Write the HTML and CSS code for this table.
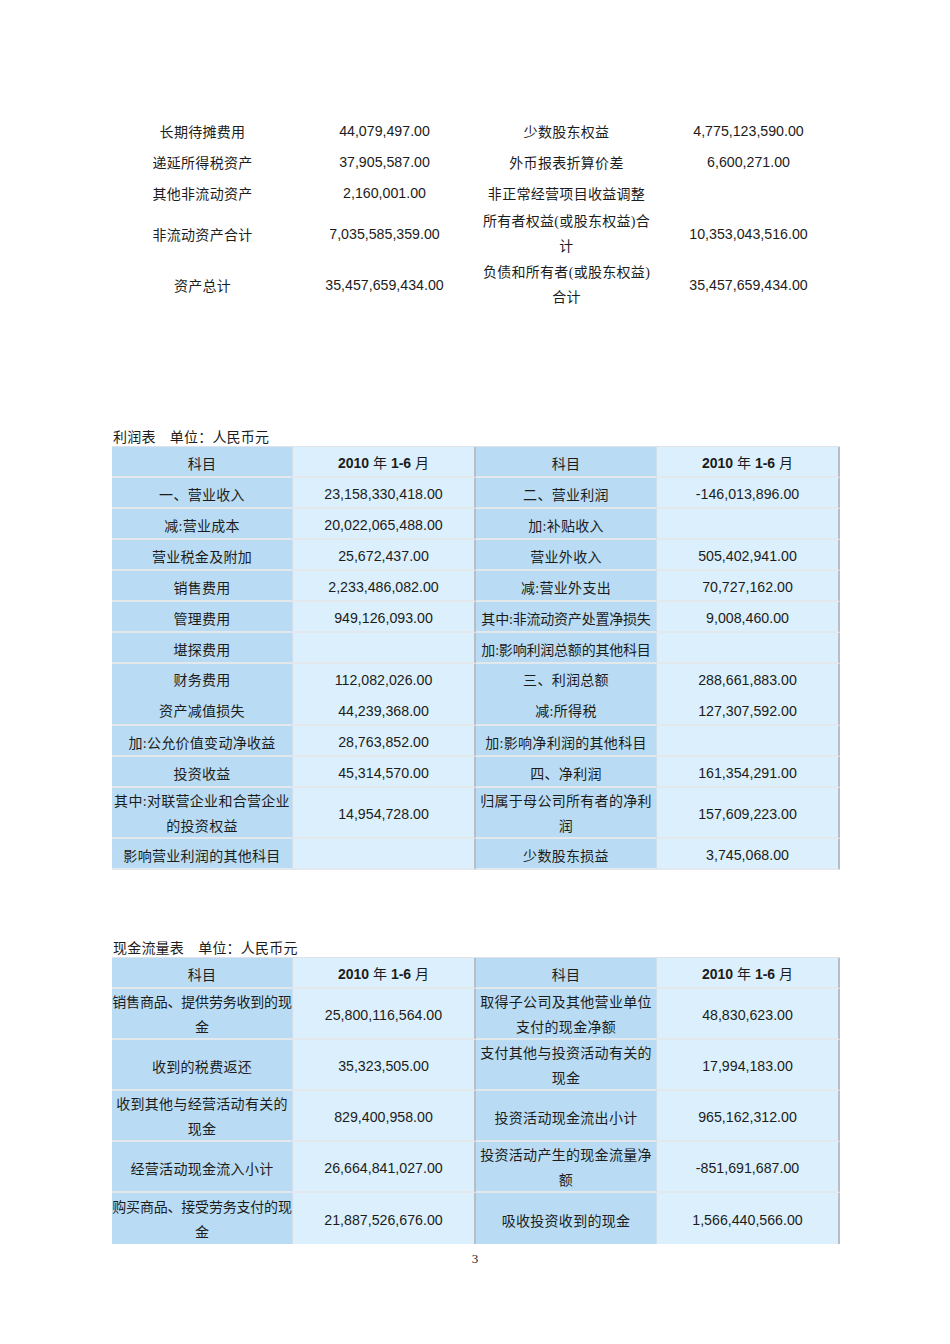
FILE: index.html
```html
<!DOCTYPE html>
<html lang="zh-CN">
<head>
<meta charset="utf-8">
<title>财务报表</title>
<link rel="stylesheet" href="styles.css">
</head>
<body>
<div class="page">
  <div class="plain">
    <div class="cell lbl">长期待摊费用</div><div class="cell num">44,079,497.00</div><div class="cell lbl">少数股东权益</div><div class="cell num">4,775,123,590.00</div>
    <div class="cell lbl">递延所得税资产</div><div class="cell num">37,905,587.00</div><div class="cell lbl">外币报表折算价差</div><div class="cell num">6,600,271.00</div>
    <div class="cell lbl">其他非流动资产</div><div class="cell num">2,160,001.00</div><div class="cell lbl">非正常经营项目收益调整</div><div class="cell num"></div>
    <div class="cell lbl tall">非流动资产合计</div><div class="cell num tall">7,035,585,359.00</div><div class="cell lbl tall wrap">所有者权益(或股东权益)合<br>计</div><div class="cell num tall">10,353,043,516.00</div>
    <div class="cell lbl tall">资产总计</div><div class="cell num tall">35,457,659,434.00</div><div class="cell lbl tall wrap">负债和所有者(或股东权益)<br>合计</div><div class="cell num tall">35,457,659,434.00</div>
  </div>

  <div class="caption caption-income">利润表　单位：人民币元</div>
  <div class="grid">
    <div class="cell k c1">科目</div><div class="cell v c2 head"><b>2010</b> 年 <b>1-6</b> 月</div><div class="cell k c3">科目</div><div class="cell v c4 head"><b>2010</b> 年 <b>1-6</b> 月</div>

    <div class="cell k c1">一、营业收入</div><div class="cell v c2">23,158,330,418.00</div><div class="cell k c3">二、营业利润</div><div class="cell v c4">-146,013,896.00</div>
    <div class="cell k c1">减:营业成本</div><div class="cell v c2">20,022,065,488.00</div><div class="cell k c3">加:补贴收入</div><div class="cell v c4"></div>
    <div class="cell k c1">营业税金及附加</div><div class="cell v c2">25,672,437.00</div><div class="cell k c3">营业外收入</div><div class="cell v c4">505,402,941.00</div>
    <div class="cell k c1">销售费用</div><div class="cell v c2">2,233,486,082.00</div><div class="cell k c3">减:营业外支出</div><div class="cell v c4">70,727,162.00</div>
    <div class="cell k c1">管理费用</div><div class="cell v c2">949,126,093.00</div><div class="cell k c3 tight">其中:非流动资产处置净损失</div><div class="cell v c4">9,008,460.00</div>
    <div class="cell k c1">堪探费用</div><div class="cell v c2"></div><div class="cell k c3 tight">加:影响利润总额的其他科目</div><div class="cell v c4"></div>

    <div class="cell k c1 dbl"><div>财务费用</div><div>资产减值损失</div></div>
    <div class="cell v c2 dbl"><div>112,082,026.00</div><div>44,239,368.00</div></div>
    <div class="cell k c3 dbl"><div>三、利润总额</div><div>减:所得税</div></div>
    <div class="cell v c4 dbl"><div>288,661,883.00</div><div>127,307,592.00</div></div>

    <div class="cell k c1">加:公允价值变动净收益</div><div class="cell v c2">28,763,852.00</div><div class="cell k c3">加:影响净利润的其他科目</div><div class="cell v c4"></div>
    <div class="cell k c1">投资收益</div><div class="cell v c2">45,314,570.00</div><div class="cell k c3">四、净利润</div><div class="cell v c4">161,354,291.00</div>
    <div class="cell k c1 tall wrap">其中:对联营企业和合营企业<br>的投资权益</div><div class="cell v c2 tall">14,954,728.00</div><div class="cell k c3 tall wrap">归属于母公司所有者的净利<br>润</div><div class="cell v c4 tall">157,609,223.00</div>
    <div class="cell k c1">影响营业利润的其他科目</div><div class="cell v c2">&nbsp;</div><div class="cell k c3">少数股东损益</div><div class="cell v c4">3,745,068.00</div>
  </div>

  <div class="caption caption-cash">现金流量表　单位：人民币元</div>
  <div class="grid">
    <div class="cell k c1">科目</div><div class="cell v c2 head"><b>2010</b> 年 <b>1-6</b> 月</div><div class="cell k c3">科目</div><div class="cell v c4 head"><b>2010</b> 年 <b>1-6</b> 月</div>

    <div class="cell k c1 tall wrap tight">销售商品、提供劳务收到的现<br>金</div><div class="cell v c2 tall">25,800,116,564.00</div><div class="cell k c3 tall wrap">取得子公司及其他营业单位<br>支付的现金净额</div><div class="cell v c4 tall">48,830,623.00</div>
    <div class="cell k c1 tall">收到的税费返还</div><div class="cell v c2 tall">35,323,505.00</div><div class="cell k c3 tall wrap">支付其他与投资活动有关的<br>现金</div><div class="cell v c4 tall">17,994,183.00</div>
    <div class="cell k c1 tall wrap">收到其他与经营活动有关的<br>现金</div><div class="cell v c2 tall">829,400,958.00</div><div class="cell k c3 tall">投资活动现金流出小计</div><div class="cell v c4 tall">965,162,312.00</div>
    <div class="cell k c1 tall">经营活动现金流入小计</div><div class="cell v c2 tall">26,664,841,027.00</div><div class="cell k c3 tall wrap">投资活动产生的现金流量净<br>额</div><div class="cell v c4 tall">-851,691,687.00</div>
    <div class="cell k c1 tall wrap tight last">购买商品、接受劳务支付的现<br>金</div><div class="cell v c2 tall last">21,887,526,676.00</div><div class="cell k c3 tall last">吸收投资收到的现金</div><div class="cell v c4 tall last">1,566,440,566.00</div>
  </div>

  <div class="pagenum">3</div>
</div>
</body>
</html>
```

FILE: styles.css
```css
html, body {
  margin: 0;
  padding: 0;
  background: #ffffff;
}

body {
  font-family: "Liberation Serif", "Noto Sans CJK SC", serif;
  font-size: 14px;
  color: #1c1c1c;
}

.page {
  width: 950px;
  padding-top: 115px;
}

.plain,
.grid {
  display: grid;
  grid-template-columns: 181px 183px 181px 183px;
  width: 728px;
  margin-left: 112px;
}

.cell {
  box-sizing: border-box;
  display: flex;
  flex-direction: column;
  align-items: center;
  justify-content: center;
  text-align: center;
  height: 31px;
  white-space: nowrap;
  letter-spacing: 0.3px;
}

.grid .cell {
  padding-top: 3px;
}

.cell.tall {
  height: 51px;
}

.cell.dbl {
  height: 62px;
}

.cell.dbl > div {
  line-height: 31px;
}

.cell.wrap {
  line-height: 25px;
}

.cell.tight {
  letter-spacing: -0.2px;
}

.num,
.v {
  font-family: "Liberation Sans", "Noto Sans CJK SC", sans-serif;
  font-size: 14.2px;
  letter-spacing: 0;
}

.grid .v.head {
  display: block;
  padding-top: 1px;
  line-height: 31px;
  font-size: 14px;
}

.v.head b {
  font-weight: bold;
}

.plain .lbl,
.plain .num {
  padding-top: 1px;
}

.caption {
  margin-left: 113px;
  line-height: 16px;
  height: 16px;
  letter-spacing: 0.2px;
}

.caption-income {
  margin-top: 120px;
}

.caption-cash {
  margin-top: 71px;
}

.grid {
  border-top: 1px solid #dde3e8;
}

.k {
  background: #b9dcf4;
  border-bottom: 2px solid #e2e8ec;
}

.v {
  background: #dbf0fc;
  border-bottom: 2px solid #e2e8ec;
}

.c1,
.c3 {
  border-right: 1px solid #d2dee7;
}

.c2,
.c4 {
  border-right: 2px solid #b6bfc7;
}

.cell.last {
  border-bottom: none;
  height: 51px;
}

.pagenum {
  margin-top: 7px;
  text-align: center;
  line-height: 16px;
  font-size: 13px;
  width: 950px;
}
```
